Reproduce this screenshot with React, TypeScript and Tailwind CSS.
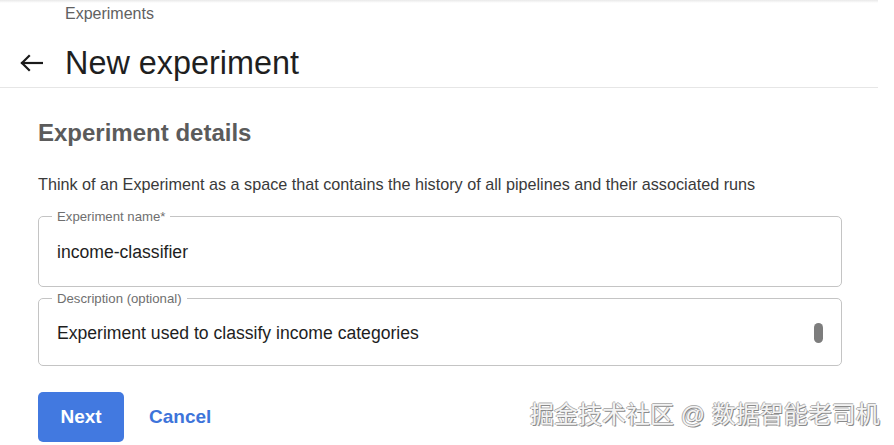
const font = { fontFamily: '"Liberation Sans", Arial, "Noto Sans CJK SC", sans-serif' };

function BackArrow() {
  return (
    <svg width="24" height="18" viewBox="0 0 24 18" fill="none" stroke="#1a1a1a" strokeWidth="2.2" strokeLinecap="square">
      <path d="M23 9H3" />
      <path d="M10 2L3 9l7 7" />
    </svg>
  );
}

function OutlinedField({ label, value, scroll, className }: { label: string; value: string; scroll?: boolean; className: string }) {
  return (
    <fieldset className={`relative rounded-[5px] border border-[#c4c4c4] px-[13px] flex items-center ${className}`}>
      <legend className="px-[5px] text-[13.2px] leading-[13px] text-[#6f6f6f]">{label}</legend>
      <span className="pl-[5px] text-[17.6px] text-[#1e1e1e] -mt-[4px]">{value}</span>
      {scroll && (
        <span className="absolute right-[18px] top-[18px] w-[9px] h-[20px] rounded-full bg-[#7d7d7d]" />
      )}
    </fieldset>
  );
}

export default function App() {
  return (
    <div className="relative w-[894px] h-[445px] bg-white overflow-hidden" style={font}>
      <div className="w-[878px]">
        {/* Header */}
        <div className="h-[88px] border-b border-[#e6e6e6] bg-gradient-to-b from-[#e9e9e9] via-white to-white bg-[length:100%_6px] bg-no-repeat">
          <div className="pl-[65px] pt-[5px] text-[16px] leading-[18px] text-[#616161]">Experiments</div>
          <div className="flex items-center mt-[21px]">
            <div className="ml-[19px] w-[24px] h-[18px] flex items-center">
              <BackArrow />
            </div>
            <h1 className="ml-[22px] text-[32.4px] leading-[38px] text-[#1f1f1f]">New experiment</h1>
          </div>
        </div>

        {/* Content */}
        <div className="pl-[38px] pr-[36px]">
          <h2 className="mt-[31px] text-[24px] leading-[28px] font-bold text-[#5b5b5b]">Experiment details</h2>
          <p className="mt-[28px] text-[16.2px] leading-[19px] text-[#3a3a3a]">
            Think of an Experiment as a space that contains the history of all pipelines and their associated runs
          </p>
          <div className="mt-[16px]">
            <OutlinedField className="h-[77px]" label="Experiment name*" value="income-classifier" />
          </div>
          <div className="mt-[5px]">
            <OutlinedField className="h-[74px]" label="Description (optional)" value="Experiment used to classify income categories" scroll />
          </div>
          <div className="mt-[26px] flex items-center">
            <button className="w-[86px] h-[50px] rounded-[5px] bg-[#4279e0] text-white text-[19px] font-bold">Next</button>
            <button className="ml-[25px] text-[19px] font-bold text-[#3d74da]">Cancel</button>
          </div>
        </div>
      </div>

      {/* Watermark */}
      <div className="absolute left-[530px] top-[401px] text-[24px] leading-[28px] text-[#f4f4f4] [text-shadow:1px_1px_0_#8a8a8a,-1px_0_0_#b0b0b0,0_-1px_0_#b0b0b0]">
        掘金技术社区 @ 数据智能老司机
      </div>
    </div>
  );
}
